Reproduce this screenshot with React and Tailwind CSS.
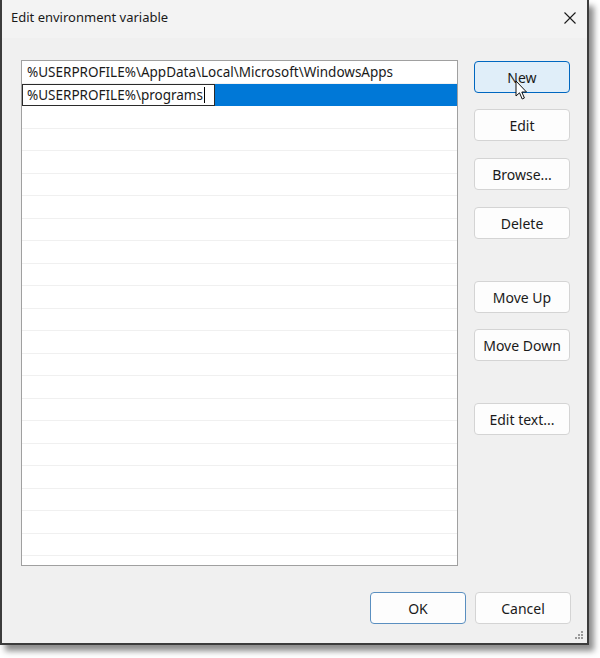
import React from "react";

const font = { fontFamily: '"Noto Sans", "Open Sans", sans-serif' };

function Btn({ children, className = "", variant = "normal" }) {
  const v =
    variant === "hover"
      ? "bg-[#e0eef9] border-[#0067c0]"
      : variant === "default"
      ? "bg-[#fdfdfd] border-[#5a8fc0]"
      : "bg-[#fdfdfd] border-[#d4d4d4]";
  return (
    <div
      className={`relative w-[96px] h-[32px] rounded-[4px] border flex items-center justify-center text-[14px] text-[#1a1a1a] ${v} ${className}`}
    >
      {children}
    </div>
  );
}

export default function App() {
  const rows = Array.from({ length: 20 });
  return (
    <div className="w-[600px] h-[658px] bg-white overflow-hidden" style={font}>
      <div className="w-[589px] h-[645px] bg-[#f0f0f0] border-l-2 border-r-2 border-b-2 border-[#3c3c3c] shadow-[5px_6px_6px_rgba(0,0,0,0.45)] flex flex-col relative">
        {/* title bar */}
        <div className="h-[38px] flex items-center justify-between pl-[9px] pr-[11px] bg-[#f3f3f3]">
          <span className="text-[13px] text-[#1a1a1a] -mt-[2px]">Edit environment variable</span>
          <svg width="12" height="12" viewBox="0 0 12 12" className="-mt-[2px]">
            <path d="M0.5 0.5 L11.5 11.5 M11.5 0.5 L0.5 11.5" stroke="#1a1a1a" strokeWidth="1.1" />
          </svg>
        </div>
        {/* content */}
        <div className="flex pt-[22px] pl-[19px]">
          <div className="w-[437px] h-[506px] bg-white border border-[#a0a0a0] flex flex-col overflow-hidden">
            <div className="h-[22.5px] flex items-center pl-[5px] pt-[1px] text-[13.5px] text-[#1a1a1a] border-b border-[#f2f2f2] shrink-0">
              %USERPROFILE%\AppData\Local\Microsoft\WindowsApps
            </div>
            <div className="h-[22.5px] flex shrink-0">
              <div className="w-[193px] h-full bg-white border border-[#2b2b2b] flex items-center pl-[4px] text-[13.5px] text-[#1a1a1a]">
                <span>%USERPROFILE%\programs</span>
                <span className="w-px h-[16px] bg-black ml-[1px]" />
              </div>
              <div className="flex-1 bg-[#0078d7]" />
            </div>
            {rows.map((_, i) => (
              <div key={i} className="h-[22.5px] border-b border-[#f0f0f0] shrink-0" />
            ))}
          </div>
          <div className="flex flex-col ml-[16px] pt-[1px]">
            <Btn variant="hover">
              New
              <svg
                width="14"
                height="21"
                viewBox="0 0 14 21"
                className="absolute left-[40px] top-[18px]"
              >
                <path
                  d="M1 1 L1 16 L4.5 12.8 L7.2 19 L9.4 18 L6.8 12 L11.5 12 Z"
                  fill="white"
                  stroke="#111"
                  strokeWidth="1"
                  strokeLinejoin="round"
                />
              </svg>
            </Btn>
            <Btn className="mt-[16px]">Edit</Btn>
            <Btn className="mt-[17px]">Browse...</Btn>
            <Btn className="mt-[17px]">Delete</Btn>
            <Btn className="mt-[42px]">Move Up</Btn>
            <Btn className="mt-[16px]">Move Down</Btn>
            <Btn className="mt-[42px]">Edit text...</Btn>
          </div>
        </div>
        <div className="flex justify-end gap-[9px] pr-[16px] mt-[26px]">
          <Btn variant="default">OK</Btn>
          <Btn>Cancel</Btn>
        </div>
        {/* resize grip */}
        <svg width="9" height="9" viewBox="0 0 9 9" className="absolute right-[3px] bottom-[3px]">
          <g fill="#9a9a9a">
            <rect x="6" y="0" width="2" height="2" />
            <rect x="3" y="3" width="2" height="2" />
            <rect x="6" y="3" width="2" height="2" />
            <rect x="0" y="6" width="2" height="2" />
            <rect x="3" y="6" width="2" height="2" />
            <rect x="6" y="6" width="2" height="2" />
          </g>
        </svg>
      </div>
    </div>
  );
}
